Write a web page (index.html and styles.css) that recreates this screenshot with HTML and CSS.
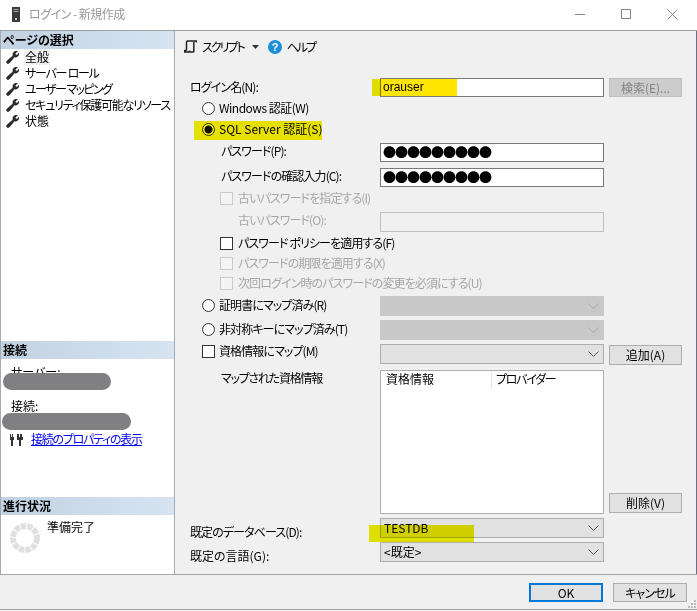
FILE: index.html
```html
<!DOCTYPE html>
<html lang="ja">
<head>
<meta charset="utf-8">
<title>ログイン - 新規作成</title>
<link rel="stylesheet" href="styles.css">
</head>
<body>
<div class="window">
  <header class="titlebar">
    <svg class="app-icon" width="10" height="15" viewBox="0 0 10 15"><rect x="1" y="0" width="8" height="15" fill="#3a3a3a"/><rect x="2.5" y="2" width="5" height="1" fill="#aaa"/><rect x="2.5" y="4" width="5" height="1" fill="#aaa"/><rect x="4" y="11" width="2" height="2" fill="#ccc"/></svg>
    <span class="title ls1">ログイン - 新規作成</span>
    <div class="winctl">
      <svg width="12" height="12" viewBox="0 0 12 12"><path d="M1 6.500h10" stroke="#888" fill="none"/></svg>
      <svg width="11" height="11" viewBox="0 0 11 11"><rect x="0.5" y="0.5" width="9" height="9" stroke="#888" fill="none"/></svg>
      <svg width="11" height="11" viewBox="0 0 11 11"><path d="M0.5 0.5l10 10M10.500 0.5l-10 10" stroke="#888" fill="none"/></svg>
    </div>
  </header>
  <div class="body">
    <aside class="sidebar">
      <section class="pane pane-pages">
        <h2 class="pane-head">ページの選択</h2>
        <ul class="pages">
          <li class="page"><svg class="wrench" viewBox="0 0 13 13"><use href="#wr"/></svg><span class="page-label page-current">全般</span></li>
          <li class="page"><svg class="wrench" viewBox="0 0 13 13"><use href="#wr"/></svg><span class="page-label ls3">サーバー ロール</span></li>
          <li class="page"><svg class="wrench" viewBox="0 0 13 13"><use href="#wr"/></svg><span class="page-label ls4">ユーザー マッピング</span></li>
          <li class="page"><svg class="wrench" viewBox="0 0 13 13"><use href="#wr"/></svg><span class="page-label ls3">セキュリティ保護可能なリソース</span></li>
          <li class="page"><svg class="wrench" viewBox="0 0 13 13"><use href="#wr"/></svg><span class="page-label">状態</span></li>
        </ul>
      </section>
      <section class="pane">
        <h2 class="pane-head">接続</h2>
        <div class="conn-label conn-server">サーバー:</div>
        <div class="conn-label conn-conn">接続:</div>
        <div class="conn-link">
          <svg width="14" height="13" viewBox="0 0 14 13"><path d="M0 1h1v3h1V1h1v3h1v3H3v6H1V7H0zM7 1h2v3h1V1h2v3h1v3h-2v6H9V7H7z" fill="#333"/></svg>
          <a href="#" class="ls3">接続のプロパティの表示</a>
        </div>
        <div class="redact redact-a"></div>
        <div class="redact redact-b"></div>
      </section>
      <section class="pane">
        <h2 class="pane-head">進行状況</h2>
        <div class="progress">
          <svg class="spinner" width="30" height="30" viewBox="0 0 30 30"><circle cx="15" cy="15" r="12" fill="none" stroke="#e0e0e0" stroke-width="6" stroke-dasharray="5.4 1.1"/></svg>
          <span>準備完了</span>
        </div>
      </section>
    </aside>
    <main class="main">
      <div class="toolbar">
        <svg width="13" height="13" viewBox="0 0 13 13"><path d="M3.500 1h9v1.500M3.500 1C2.500 1 2.500 2.500 2.500 2.500V10.500M2.500 10.500H.7V12h8.300c.8 0 .8-.8.8-.8V2M5.500 10.500V12" fill="none" stroke="#222" stroke-width="1.500"/></svg>
        <span class="tool-text ls5">スクリプト</span>
        <svg class="caret" width="7" height="4" viewBox="0 0 7 4"><path d="M0 0h7L3.500 4z" fill="#333"/></svg>
        <svg class="help" width="14" height="14" viewBox="0 0 14 14"><circle cx="7" cy="7" r="7" fill="#1c8fd6"/><text x="7" y="11" text-anchor="middle" class="help-q">?</text></svg>
        <span class="tool-text ls5">ヘルプ</span>
      </div>
      <form class="form">
        <label class="lbl ls2">ログイン名(N):</label>
        <div class="field field-name">orauser</div>
        <button type="button" class="btn btn-off" disabled>検索(E)...</button>

        <label class="opt opt-a row-wide ls1"><input type="radio" name="auth">Windows 認証(W)</label>
        <label class="opt opt-a row-wide"><input type="radio" name="auth" checked>SQL Server 認証(S)</label>

        <label class="lbl lbl-b ls2">パスワード(P):</label>
        <div class="field field-pw">●●●●●●●●●</div>
        <span></span>
        <label class="lbl lbl-b ls2">パスワードの確認入力(C):</label>
        <div class="field field-pw">●●●●●●●●●</div>
        <span></span>

        <label class="opt opt-b row-wide off ls2"><input type="checkbox" disabled>古いパスワードを指定する(I)</label>
        <label class="lbl lbl-c off ls2">古いパスワード(O):</label>
        <div class="field field-off"></div>
        <span></span>
        <label class="opt opt-b row-wide ls2"><input type="checkbox">パスワード ポリシーを適用する(F)</label>
        <label class="opt opt-b row-wide off ls2"><input type="checkbox" disabled>パスワードの期限を適用する(X)</label>
        <label class="opt opt-b row-wide off ls2"><input type="checkbox" disabled>次回ログイン時のパスワードの変更を必須にする(U)</label>

        <label class="opt opt-a opt-top ls2"><input type="radio" name="map">証明書にマップ済み(R)</label>
        <div class="select select-off"><svg class="chev" width="11" height="6" viewBox="0 0 11 6"><path d="M.5.5l5 5 5-5" fill="none" stroke="#aaa"/></svg></div>
        <span></span>
        <label class="opt opt-a opt-top ls2"><input type="radio" name="map">非対称キーにマップ済み(T)</label>
        <div class="select select-off"><svg class="chev" width="11" height="6" viewBox="0 0 11 6"><path d="M.5.5l5 5 5-5" fill="none" stroke="#aaa"/></svg></div>
        <span></span>
        <label class="opt opt-a opt-top opt-cred ls2"><input type="checkbox">資格情報にマップ(M)</label>
        <div class="select"><svg class="chev" width="11" height="6" viewBox="0 0 11 6"><path d="M.5.5l5 5 5-5" fill="none" stroke="#555"/></svg></div>
        <button type="button" class="btn btn-add">追加(A)</button>

        <label class="lbl lbl-b lbl-map ls3">マップされた資格情報</label>
        <div class="list">
          <div class="list-head"><span class="col-a">資格情報</span><span class="col-b ls3">プロバイダー</span></div>
        </div>
        <button type="button" class="btn btn-del">削除(V)</button>

        <label class="lbl lbl-db ls2">既定のデータベース(D):</label>
        <div class="select"><span class="sel-text">TESTDB</span><svg class="chev" width="11" height="6" viewBox="0 0 11 6"><path d="M.5.5l5 5 5-5" fill="none" stroke="#555"/></svg></div>
        <span></span>
        <label class="lbl lbl-db">既定の言語(G):</label>
        <div class="select"><span class="sel-text">&lt;既定&gt;</span><svg class="chev" width="11" height="6" viewBox="0 0 11 6"><path d="M.5.5l5 5 5-5" fill="none" stroke="#555"/></svg></div>
        <span></span>
      </form>
    </main>
  </div>
  <footer class="footer">
    <button type="button" class="btn btn-foot btn-ok">OK</button>
    <button type="button" class="btn btn-foot ls2">キャンセル</button>
    <svg class="grip" width="10" height="10" viewBox="0 0 10 10"><path d="M7 1h2v2H7zM4 4h2v2H4zM7 4h2v2H7zM1 7h2v2H1zM4 7h2v2H4zM7 7h2v2H7z" fill="#bbb"/></svg>
  </footer>
  <div class="mark mark-name"></div>
  <div class="mark mark-name-in"></div>
  <div class="mark mark-sql"></div>
  <div class="mark mark-db"></div>
</div>
<svg width="0" height="0" class="defs"><defs><path id="wr" d="M13 2.500c0 2.600-2.300 4.200-4.600 3.600L4 11.500c-1 1.200-2.300 1.500-3.100.7S.4 10.200 1.600 9.200L7 4.700C6.300 2.200 8 0 10.500 0l1 .2L9.300 2.500l.5 1.300 1.300.5L12.800 1.800z" fill="#2b2b2b" stroke="#2b2b2b" stroke-width=".5"/></defs></svg>
</body>
</html>
```
FILE: styles.css
```css
* { box-sizing: border-box; }
html, body { margin: 0; padding: 0; }
body {
  font-family: "Noto Sans CJK JP", "Noto Sans", sans-serif;
  font-feature-settings: "palt";
  font-size: 12px;
  line-height: 16px;
  color: #000;
  background: #fff;
  overflow: hidden;
}
.defs { position: absolute; }
.window {
  position: relative;
  width: 697px;
  height: 611px;
  display: flex;
  flex-direction: column;
  background: #f0f0f0;
}

/* kana in the original UI font sets tighter */
.ls1 { letter-spacing: -0.5px; }
.ls2 { letter-spacing: -0.9px; }
.ls3 { letter-spacing: -1.25px; }
.ls4 { letter-spacing: -1.6px; }
.ls5 { letter-spacing: -2px; }

/* title bar */
.titlebar {
  height: 31px;
  flex: none;
  background: #fff;
  border-bottom: 1px solid #a0a0a0;
  display: flex;
  align-items: center;
  padding: 0 19px 2px 11px;
}
.title { margin-left: 8px; color: #999; }
.winctl { margin-left: auto; display: flex; gap: 35px; align-items: center; }

/* main split */
.body { height: 544px; flex: none; display: flex; border-bottom: 1px solid #a5a5a5; }
.sidebar {
  width: 175px;
  flex: none;
  background: #fff;
  border-left: 1px solid #a9a9b0;
  border-right: 1px solid #a9a9b0;
  display: grid;
  grid-template-rows: 310px 156px 77px;
}
.pane { position: relative; min-height: 0; overflow: hidden; }
.pane-head {
  margin: 0;
  height: 18px;
  padding-left: 2px;
  font-size: 12px;
  line-height: 18px;
  font-weight: 700;
  background: linear-gradient(to right, #c2d2e2, #d6e4f2);
}
.pages { list-style: none; margin: 0; padding: 0; }
.page { height: 16px; display: flex; align-items: center; padding-left: 5px; }
.wrench { width: 13px; height: 13px; flex: none; }
.page-label { margin-left: 5px; padding: 0 1px; white-space: nowrap; }
.page-current { background: #f0f0f0; }
.conn-label { padding-left: 10px; }
.conn-server { margin-top: 5px; height: 16px; }
.conn-conn { margin-top: 18px; }
.conn-link { margin-top: 17px; padding-left: 9px; display: flex; align-items: center; gap: 7px; }
.conn-link a { color: #0000ee; }
.redact { position: absolute; height: 17px; border-radius: 9px; background: #808083; }
.redact-a { left: 2px; top: 32px; width: 108px; }
.redact-b { left: 1px; top: 72px; width: 129px; }
.progress { display: flex; padding: 4px 0 0 9px; }
.progress span { margin-left: 7px; }
.spinner { margin-top: 4px; flex: none; }

/* right */
.main { flex: 1; min-width: 0; border-right: 1px solid #6a7080; }
.toolbar { height: 47px; padding: 8px 0 0 9px; display: flex; align-items: flex-start; }
.toolbar svg { margin-top: 1px; }
.tool-text { margin-left: 5px; }
.caret { margin: 6px 0 0 8px !important; }
.help { margin: 1px 0 0 9px !important; }
.help-q { fill: #fff; font: 700 11px "Liberation Sans", sans-serif; }
.form {
  padding-left: 15px;
  display: grid;
  grid-template-columns: 185px 224px 73px;
  column-gap: 5px;
  grid-template-rows: 20px 21px 24px 25px 20px 24px 21px 20px 20px 23px 24px 24px 26px 148px 24px 20px;
}
.row-wide { grid-column: 1 / -1; }
.lbl { white-space: nowrap; line-height: 18px; }
.lbl-b { padding-left: 31px; line-height: 16px; }
.lbl-c { padding-left: 48px; line-height: 16px; }
.lbl-map { padding-top: 0; }
.lbl-db { padding-top: 5px; }
.off { color: #a6a6a6; }
.opt { display: flex; align-items: center; white-space: nowrap; height: 20px; }
.opt-a { padding-left: 12px; }
.opt-b { padding-left: 30px; }
.opt-top { align-self: start; margin-top: -1px; }
.opt-cred { margin-top: -3px; }
.opt input {
  appearance: none;
  width: 13px;
  height: 13px;
  margin: 0 4px 0 0;
  background: #fff;
  border: 1px solid #333;
  flex: none;
}
.opt-b input { margin-right: 5px; }
.opt input[type="radio"] { border-radius: 50%; }
.opt input[type="radio"]:checked { background: radial-gradient(circle, #111 0 3.6px, #fff 4.4px); }
.opt input:disabled { background: #f4f4f4; border-color: #cacaca; }
.field {
  height: 19px;
  background: #fff;
  border: 1px solid #7a7a7a;
  padding-left: 2px;
  line-height: 17px;
  overflow: hidden;
}
.field-name { font-family: "Liberation Sans", sans-serif; }
.field-pw { font-size: 13px; font-feature-settings: normal; letter-spacing: -1px; line-height: 16px; }
.field-off { height: 20px; background: #f0f0f0; border-color: #bfbfbf; }
.select {
  position: relative;
  height: 20px;
  background: #e1e1e1;
  border: 1px solid #adadad;
  padding-left: 3px;
  line-height: 18px;
}
.select-off { background: #c8c8c8; border-color: #c8c8c8; }
.chev { position: absolute; right: 4px; top: 6px; }
.btn {
  height: 20px;
  padding: 0;
  background: #e1e1e1;
  border: 1px solid #adadad;
  font-family: inherit;
  font-size: inherit;
  font-feature-settings: inherit;
  line-height: inherit;
  color: #000;
}
.btn-off { height: 19px; background: #ccc; border-color: #bfbfbf; color: #838383; }
.btn-add { margin-top: 1px; }
.btn-del { align-self: end; margin-bottom: 5px; }
.list { background: #fff; border: 1px solid #adadad; height: 144px; }
.list-head { display: grid; grid-template-columns: 111px 1fr; height: 18px; }
.col-a { padding-left: 5px; border-right: 1px solid #e5e5e5; }
.col-b { padding-left: 4px; }

/* footer */
.footer { height: 35px; flex: none; border-bottom: 1px solid #a5a5a5; position: relative; display: flex; justify-content: flex-end; gap: 10px; padding: 8px 10px 0 0; }
.btn-foot { width: 74px; height: 19px; line-height: 13px; }
.btn-ok { border: 2px solid #0078d7; }
.grip { position: absolute; right: 0; bottom: 0; }

/* hand-drawn highlighter marks */
.mark { position: absolute; mix-blend-mode: multiply; }
.mark-name { left: 372px; top: 79px; width: 8px; height: 17px; background: #eeea00; }
.mark-name-in { left: 380px; top: 79px; width: 77px; height: 17px; background: #ffe600; }
.mark-sql { left: 194px; top: 121px; width: 128px; height: 19px; background: #f4ee00; }
.mark-db { left: 369px; top: 525px; width: 105px; height: 17px; background: #ecec00; }
```
